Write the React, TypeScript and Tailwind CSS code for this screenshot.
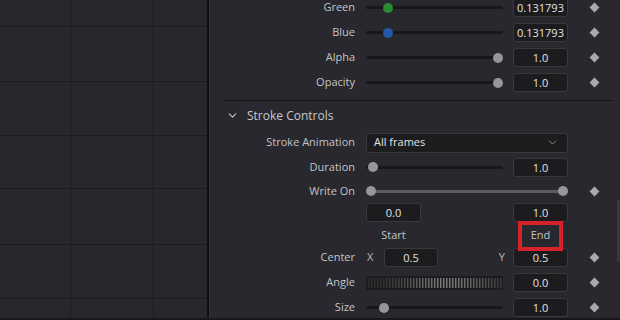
import { ChevronDown } from "lucide-react";

const font = { fontFamily: '"Open Sans", "Noto Sans", sans-serif' };

const Diamond = () => (
  <div className="w-[52px] flex justify-center">
    <div className="w-[7px] h-[7px] rotate-45 bg-[#a9a9ad]" />
  </div>
);

const Empty = () => <div className="w-[52px]" />;

const Field = ({ value, className = "" }: { value: string; className?: string }) => (
  <div
    className={`h-[19px] bg-[#1c1c1f] border border-[#38383d] rounded-[3px] flex items-center justify-center text-[11px] text-[#e2e2e2] leading-none overflow-visible whitespace-nowrap ${className}`}
  >
    {value}
  </div>
);

const Row = ({
  label,
  h,
  children,
  diamond,
}: {
  label?: string;
  h: string;
  children: React.ReactNode;
  diamond?: boolean;
}) => (
  <div className={`flex items-center shrink-0 ${h}`}>
    <div className="w-[145px] text-right text-[11px] text-[#c4c4c8] whitespace-nowrap">{label}</div>
    <div className="ml-[11px] w-[202px] flex items-center">{children}</div>
    {diamond ? <Diamond /> : <Empty />}
  </div>
);

const Slider = ({ pos, color = "#969699" }: { pos: number; color?: string }) => (
  <div className="relative w-[137px] h-[10px] flex items-center">
    <div className="w-full h-[3px] rounded-full bg-[#18181a]" />
    <div
      className="absolute top-0 w-[10px] h-[10px] rounded-full"
      style={{ left: pos - 5, backgroundColor: color }}
    />
  </div>
);

const SliderRow = ({
  label,
  pos,
  value,
  color,
  diamond = true,
  h = "h-[25px]",
}: {
  label: string;
  pos: number;
  value: string;
  color?: string;
  diamond?: boolean;
  h?: string;
}) => (
  <Row label={label} h={h} diamond={diamond}>
    <Slider pos={pos} color={color} />
    <Field value={value} className="ml-[10px] w-[55px]" />
  </Row>
);

const AngleWheel = () => {
  const ticks = [];
  for (let x = 2; x < 137; x += 3) {
    const d = (x - 80) / 45;
    const b = Math.exp(-d * d);
    const c = Math.round(40 + b * 80);
    ticks.push(<rect key={x} x={x} y={2} width={1.5} height={10} fill={`rgb(${c},${c},${c + 2})`} />);
  }
  return (
    <svg width="137" height="14" className="block">
      <rect width="137" height="14" fill="#1d1d20" />
      {ticks}
    </svg>
  );
};

const GridCanvas = () => {
  const v = [70, 153];
  const h = [26, 81, 135, 188, 244, 298];
  return (
    <svg width="207" height="318" className="block">
      <rect width="207" height="318" fill="#28272d" />
      {v.map((x) => (
        <rect key={"v" + x} x={x} y={0} width={1} height={318} fill="#1d1c21" />
      ))}
      {h.map((y) => (
        <rect key={"h" + y} x={0} y={y} width={207} height={1} fill="#1d1c21" />
      ))}
    </svg>
  );
};

export default function App() {
  return (
    <div className="w-[620px] h-[320px] flex flex-col bg-[#28282e] overflow-hidden" style={font}>
      <div className="flex flex-1 overflow-hidden">
        <div className="w-[207px] shrink-0">
          <GridCanvas />
        </div>
        <div className="w-[2px] shrink-0 bg-[#0f0f11]" />
        <div className="w-px shrink-0 bg-[#323238]" />
        <div className="relative flex-1 flex flex-col overflow-hidden">
          <div className="mt-[-5px] flex flex-col">
            <SliderRow label="Green" pos={22} value="0.131793" color="#2b8a32" />
            <SliderRow label="Blue" pos={22} value="0.131793" color="#2459a6" />
            <SliderRow label="Alpha" pos={132} value="1.0" />
            <SliderRow label="Opacity" pos={132} value="1.0" />
          </div>
          <div className="mt-[5px] ml-[14px] mr-[6px] h-px bg-[#141416] shrink-0" />
          <div className="h-[29px] shrink-0 flex items-center pl-[16px] gap-[8px] text-[12px] text-[#c8c8cc]">
            <ChevronDown size={13} strokeWidth={2} className="text-[#c0c0c4]" />
            <span>Stroke Controls</span>
          </div>
          <Row label="Stroke Animation" h="h-[25px]">
            <div className="w-full h-[20px] bg-[#1c1c1f] border border-[#38383d] rounded-[3px] flex items-center justify-between pl-[7px] pr-[8px] text-[11px] text-[#e2e2e2]">
              <span>All frames</span>
              <ChevronDown size={13} strokeWidth={1.6} className="text-[#9a9a9e]" />
            </div>
          </Row>
          <SliderRow label="Duration" pos={7} value="1.0" diamond={false} h="h-[24px]" />
          <Row label="Write On" h="h-[24px]" diamond>
            <div className="relative w-full h-[10px] flex items-center">
              <div className="ml-[5px] mr-[5px] flex-1 h-[3px] rounded-full bg-[#5d5d61]" />
              <div className="absolute left-0 top-0 w-[10px] h-[10px] rounded-full bg-[#969699]" />
              <div className="absolute right-0 top-0 w-[10px] h-[10px] rounded-full bg-[#969699]" />
            </div>
          </Row>
          <Row h="h-[19px]">
            <Field value="0.0" className="w-[55px]" />
            <div className="w-[92px]" />
            <Field value="1.0" className="w-[55px]" />
          </Row>
          <Row h="h-[23px]">
            <div className="w-[55px] pt-[3px] text-center text-[11px] text-[#c4c4c8]">Start</div>
            <div className="w-[92px]" />
            <div className="relative w-[55px] pt-[3px] text-center text-[11px] text-[#c4c4c8]">
              End
              <div className="absolute left-[5px] top-[-3px] w-[45px] h-[30px] border-[4px] border-[#d6232b]" />
            </div>
          </Row>
          <Row label="Center" h="h-[25px]" diamond>
            <div className="w-[18px] pl-[1px] text-[11px] text-[#b8b8bc]">X</div>
            <Field value="0.5" className="w-[54px]" />
            <div className="w-[75px] text-right pr-[8px] text-[11px] text-[#b8b8bc]">Y</div>
            <Field value="0.5" className="w-[55px]" />
          </Row>
          <Row label="Angle" h="h-[25px]" diamond>
            <AngleWheel />
            <Field value="0.0" className="ml-[10px] w-[55px]" />
          </Row>
          <SliderRow label="Size" pos={18} value="1.0" />
          <div className="absolute right-0 top-[200px] w-[3px] h-[62px] bg-[#36363c]" />
        </div>
      </div>
      <div className="h-[2px] shrink-0 bg-[#18181b]" />
    </div>
  );
}
